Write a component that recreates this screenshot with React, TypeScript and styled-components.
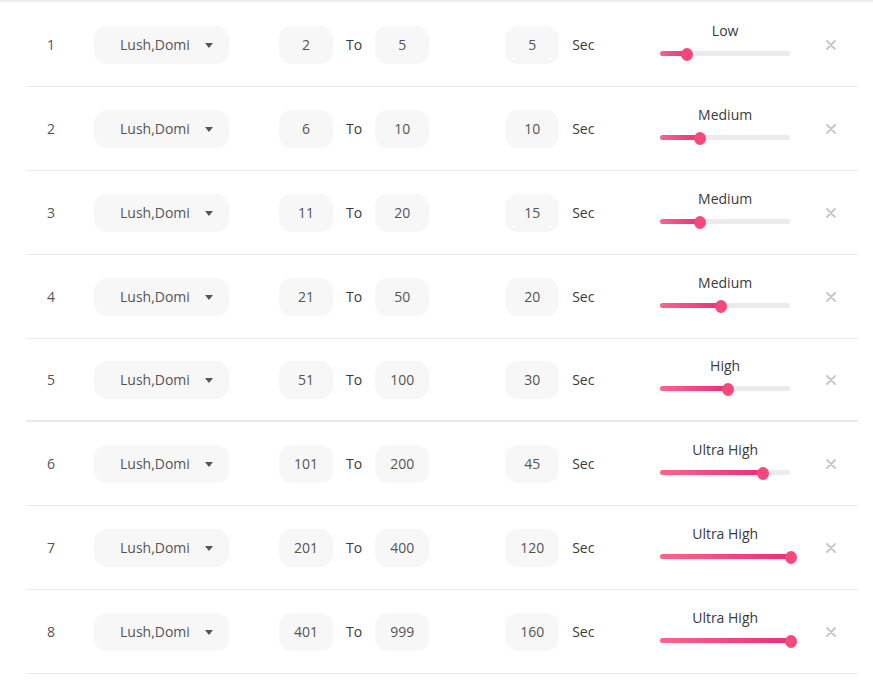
import React from "react";
import styled, { createGlobalStyle } from "styled-components";

const Global = createGlobalStyle`
  html, body { margin: 0; padding: 0; background: #fff; }
  body { font-family: "Open Sans", "Noto Sans", sans-serif; font-size: 14px; color: #333; }
`;

const Page = styled.div`
  width: 873px;
  height: 681px;
  background: #fff;
  overflow: hidden;
`;

const TopShade = styled.div`
  height: 3px;
  background: linear-gradient(#e9ebee, #f8f9fa);
`;

const List = styled.div`
  display: flex;
  flex-direction: column;
  margin: 0 15px 0 26px;
`;

const Row = styled.div<{ $thick?: boolean }>`
  display: flex;
  align-items: center;
  box-sizing: border-box;
  height: ${(p) => (p.$thick ? 83 : 84)}px;
  border-bottom: ${(p) => (p.$thick ? 2 : 1)}px solid #e9e9e9;
`;

const Num = styled.div`
  width: 50px;
  text-align: center;
  color: #555;
`;

const Select = styled.div`
  margin-left: 18px;
  width: 135px;
  height: 38px;
  box-sizing: border-box;
  border-radius: 13px;
  background: #f7f7f7;
  display: flex;
  align-items: center;
  justify-content: space-between;
  padding: 0 16px 0 26px;
  color: #555;
`;

const Caret = styled.span`
  width: 0;
  height: 0;
  border-left: 4.5px solid transparent;
  border-right: 4.5px solid transparent;
  border-top: 5px solid #555;
  margin-top: 1px;
`;

const RangeGroup = styled.div`
  margin-left: 50px;
  display: flex;
  align-items: center;
  gap: 13px;
`;

const Field = styled.div`
  width: 54px;
  height: 38px;
  border-radius: 13px;
  background: #f7f7f7;
  display: flex;
  align-items: center;
  justify-content: center;
  color: #555;
`;

const Word = styled.span`
  color: #3a3a3a;
`;

const SecGroup = styled.div`
  margin-left: 76px;
  width: 155px;
  display: flex;
  align-items: center;
  gap: 13px;
`;

const SliderCol = styled.div`
  width: 130px;
  display: flex;
  flex-direction: column;
  align-items: center;
  padding-bottom: 9px;
`;

const SliderLabel = styled.div`
  line-height: 20px;
  color: #3a3a3a;
  margin-bottom: 7px;
`;

const Track = styled.div`
  position: relative;
  width: 130px;
  height: 12px;
  &::before {
    content: "";
    position: absolute;
    left: 0;
    right: 0;
    top: 3.5px;
    height: 5px;
    border-radius: 3px;
    background: #ebebeb;
  }
`;

const Fill = styled.div`
  position: absolute;
  left: 0;
  top: 3.5px;
  height: 5px;
  border-radius: 3px;
  background: linear-gradient(90deg, #f7668b, #ee2c7c);
`;

const Thumb = styled.div`
  position: absolute;
  top: 0;
  width: 12px;
  height: 13px;
  margin-left: -6px;
  border-radius: 50%;
  background: #f5497c;
`;

const Close = styled.button`
  margin-left: 35px;
  width: 12px;
  height: 12px;
  padding: 0;
  border: 0;
  background: none;
  display: flex;
  align-items: center;
  justify-content: center;
  cursor: pointer;
`;

type RowData = {
  from: number;
  to: number;
  sec: number;
  level: string;
  pct: number;
};

const rows: RowData[] = [
  { from: 2, to: 5, sec: 5, level: "Low", pct: 21 },
  { from: 6, to: 10, sec: 10, level: "Medium", pct: 31 },
  { from: 11, to: 20, sec: 15, level: "Medium", pct: 31 },
  { from: 21, to: 50, sec: 20, level: "Medium", pct: 47 },
  { from: 51, to: 100, sec: 30, level: "High", pct: 52 },
  { from: 101, to: 200, sec: 45, level: "Ultra High", pct: 79 },
  { from: 201, to: 400, sec: 120, level: "Ultra High", pct: 101 },
  { from: 401, to: 999, sec: 160, level: "Ultra High", pct: 101 },
];

export default function App() {
  return (
    <Page>
      <Global />
      <TopShade />
      <List>
        {rows.map((r, i) => (
          <Row key={i} $thick={i === 4}>
            <Num>{i + 1}</Num>
            <Select>
              <span>Lush,Domi</span>
              <Caret />
            </Select>
            <RangeGroup>
              <Field>{r.from}</Field>
              <Word>To</Word>
              <Field>{r.to}</Field>
            </RangeGroup>
            <SecGroup>
              <Field>{r.sec}</Field>
              <Word>Sec</Word>
            </SecGroup>
            <SliderCol>
              <SliderLabel>{r.level}</SliderLabel>
              <Track>
                <Fill style={{ width: `${Math.min(r.pct, 100)}%` }} />
                <Thumb style={{ left: `${r.pct}%` }} />
              </Track>
            </SliderCol>
            <Close aria-label="remove">
              <svg width="10" height="10" viewBox="0 0 10 10">
                <path d="M1 1 L9 9 M9 1 L1 9" stroke="#c6c6c6" strokeWidth="1.8" strokeLinecap="round" />
              </svg>
            </Close>
          </Row>
        ))}
      </List>
    </Page>
  );
}
